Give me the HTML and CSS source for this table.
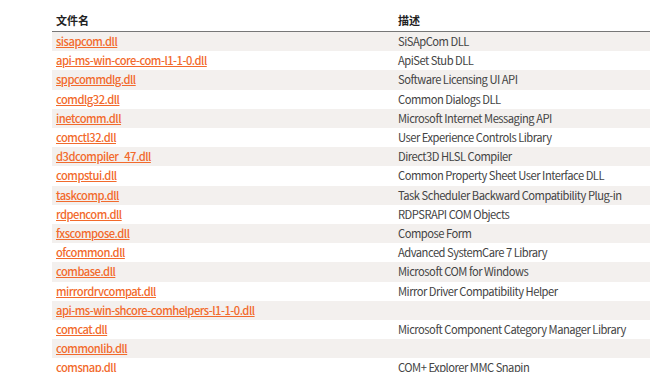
FILE: index.html
```html
<!DOCTYPE html>
<html lang="zh">
<head>
<meta charset="utf-8">
<link rel="stylesheet" href="styles.css">
</head>
<body>
<table class="dll-table">
  <thead>
    <tr><th class="col-name">文件名</th><th>描述</th></tr>
  </thead>
  <tbody>
    <tr><td><a href="#">sisapcom.dll</a></td><td>SiSApCom DLL</td></tr>
    <tr><td><a href="#">api-ms-win-core-com-l1-1-0.dll</a></td><td>ApiSet Stub DLL</td></tr>
    <tr><td><a href="#">sppcommdlg.dll</a></td><td>Software Licensing UI API</td></tr>
    <tr><td><a href="#">comdlg32.dll</a></td><td>Common Dialogs DLL</td></tr>
    <tr><td><a href="#">inetcomm.dll</a></td><td>Microsoft Internet Messaging API</td></tr>
    <tr><td><a href="#">comctl32.dll</a></td><td>User Experience Controls Library</td></tr>
    <tr><td><a href="#">d3dcompiler_47.dll</a></td><td>Direct3D HLSL Compiler</td></tr>
    <tr><td><a href="#">compstui.dll</a></td><td>Common Property Sheet User Interface DLL</td></tr>
    <tr><td><a href="#">taskcomp.dll</a></td><td>Task Scheduler Backward Compatibility Plug-in</td></tr>
    <tr><td><a href="#">rdpencom.dll</a></td><td>RDPSRAPI COM Objects</td></tr>
    <tr><td><a href="#">fxscompose.dll</a></td><td>Compose Form</td></tr>
    <tr><td><a href="#">ofcommon.dll</a></td><td>Advanced SystemCare 7 Library</td></tr>
    <tr><td><a href="#">combase.dll</a></td><td>Microsoft COM for Windows</td></tr>
    <tr><td><a href="#">mirrordrvcompat.dll</a></td><td>Mirror Driver Compatibility Helper</td></tr>
    <tr><td><a href="#">api-ms-win-shcore-comhelpers-l1-1-0.dll</a></td><td></td></tr>
    <tr><td><a href="#">comcat.dll</a></td><td>Microsoft Component Category Manager Library</td></tr>
    <tr><td><a href="#">commonlib.dll</a></td><td></td></tr>
    <tr><td><a href="#">comsnap.dll</a></td><td>COM+ Explorer MMC Snapin</td></tr>
  </tbody>
</table>
</body>
</html>
```
FILE: styles.css
```css
html, body {
  margin: 0;
  padding: 0;
  background: #fff;
  overflow: hidden;
}
body {
  font-family: "Noto Sans CJK SC", "Noto Sans", sans-serif;
  font-size: 11px;
  color: #444;
}
.dll-table {
  margin: 10px 0 0 52px;
  width: 720px;
  border-collapse: collapse;
  table-layout: fixed;
}
.dll-table th {
  text-align: left;
  font-weight: 700;
  color: #222;
  font-size: 11px;
  line-height: 20px;
  padding: 0 4px 1px;
  border-bottom: 1px solid #777;
}
.dll-table .col-name {
  width: 334px;
}
.dll-table td {
  height: 19.2px;
  line-height: 19.2px;
  padding: 0 4px;
  white-space: nowrap;
  font-size: 11.2px;
  letter-spacing: -0.5px;
}
.dll-table tbody tr:nth-child(odd) {
  background: #f3f0ee;
}
.dll-table a {
  color: #f26a2c;
  text-decoration: underline;
  font-weight: 500;
}
```
